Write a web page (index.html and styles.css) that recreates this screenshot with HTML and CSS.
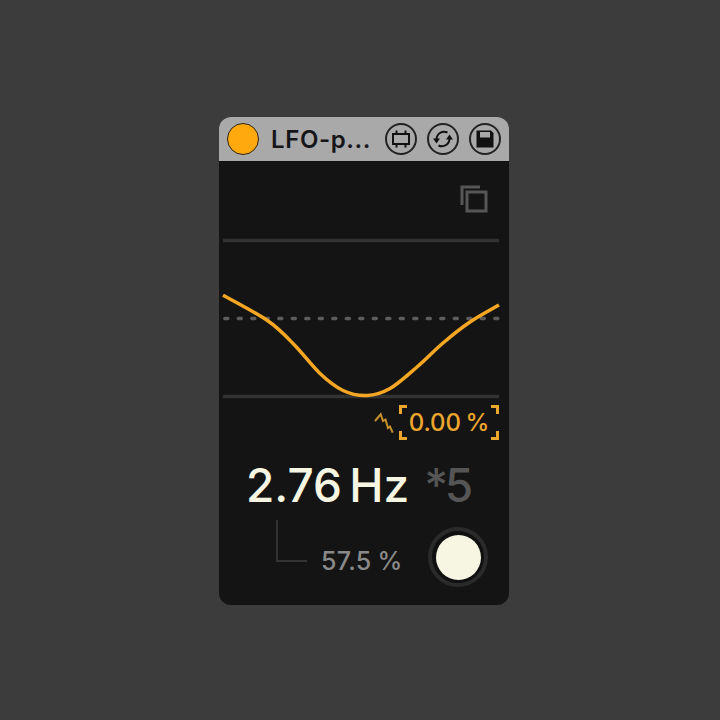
FILE: index.html
```html
<!DOCTYPE html>
<html lang="en">
<head>
<meta charset="utf-8">
<title>LFO-p...</title>
<link rel="stylesheet" href="styles.css">
</head>
<body>
<main class="device">
  <header class="titlebar">
    <span class="power"></span>
    <span class="name">LFO-p...</span>
    <span class="tools">
      <span class="tool">
        <svg viewBox="0 0 32 32" class="tool-icon"><circle cx="16" cy="16" r="15" class="ring"/><path d="M8 11h16v10H8zM11.500 7.500V11M20.500 7.500V11M11.500 21v3.500M20.500 21v3.500" class="glyph"/></svg>
      </span>
      <span class="tool">
        <svg viewBox="0 0 32 32" class="tool-icon"><circle cx="16" cy="16" r="15" class="ring"/><path d="M20.500 9.500C15 7 9.500 11 9.500 16.500M11.500 22.500C17 25 22.500 21 22.500 15.500" class="glyph"/><path d="M6 15.500h7l-3.500 5zM26 16.500h-7l3.500-5z" class="fill"/></svg>
      </span>
      <span class="tool">
        <svg viewBox="0 0 32 32" class="tool-icon"><circle cx="16" cy="16" r="15" class="ring"/><path d="M7.500 7.500h14.500l2.500 2.500v14.500H7.500zM11 9v5.500h10V9z" class="fill save"/></svg>
      </span>
    </span>
  </header>
  <section class="panel">
    <div class="copy-row">
      <svg viewBox="0 0 28 28" class="copy-icon"><path d="M20 2H2v18" class="copy-back"/><rect x="7" y="7" width="19" height="19" class="copy-front"/></svg>
    </div>
    <svg viewBox="0 0 276 167" class="plot">
      <path d="M0 1.500H276M0 157.500H276" class="grid"/>
      <path d="M1.800 79.500H276" class="dots"/>
      <path d="M0 56.200C7.300 60.200 32 73.100 43.700 81C55.400 88.900 61.100 95.200 70 104.500C78.900 113.300 88.700 126.700 97 134.500C105.300 142.300 112.200 147.800 120 151.500C127.800 155.200 136.200 156.800 144 156.500C151.800 156.200 158.700 154.200 167 149.500C175.300 144.800 185.200 135.500 194 128C202.800 120.500 211.200 111.500 220 104C228.800 96.500 237.700 89.300 247 83C256.300 76.700 271.200 68.800 276 66" class="curve"/>
    </svg>
    <div class="phase-row">
      <svg viewBox="0 0 22 22" class="wave"><path d="M3 9L8.700 2.300L11 9L13.500 7.500L16 16L18 14.500L20.700 20.700" class="wave-line"/></svg>
      <span class="phase">
        <span class="phase-value">0.00 %</span>
        <svg viewBox="0 0 100 35" class="brackets" preserveAspectRatio="none"><path d="M8 1.500H1.500V9M92 1.500h6.500V9M8 33.500H1.500V26M92 33.500h6.500V26" class="bracket"/></svg>
      </span>
    </div>
    <div class="rate-row">
      <span class="rate">2.76 Hz</span>
      <span class="multiplier">*5</span>
    </div>
    <div class="depth-row">
      <span class="elbow"></span>
      <span class="depth">57.5 %</span>
      <span class="knob"><span class="knob-fill"></span></span>
    </div>
  </section>
</main>
</body>
</html>
```

FILE: styles.css
```css
* { box-sizing: border-box; }
html, body { margin: 0; height: 100%; }
body {
  background: #3c3c3c;
  font-family: "Inter", "Liberation Sans", sans-serif;
  padding: 117px 211px 0 219px;
}
.device {
  width: 290px;
  height: 488px;
  border-radius: 12px;
  overflow: hidden;
  background: #141414;
  display: flex;
  flex-direction: column;
}
.titlebar {
  height: 45px;
  flex: none;
  background: #a9a9a9;
  border-bottom: 1px solid #111;
  display: flex;
  align-items: center;
  padding: 0 8px 0 8px;
}
.power {
  width: 32px;
  height: 32px;
  border-radius: 50%;
  background: #ffa90e;
  border: 1.500px solid #2a2418;
}
.name {
  margin-left: 12px;
  font-size: 24px;
  font-weight: 600;
  color: #15151a;
  letter-spacing: .6px;
  flex: 1;
  white-space: nowrap;
}
.tools { display: flex; gap: 10px; }
.tool { display: block; width: 32px; height: 32px; }
.tool-icon { display: block; width: 32px; height: 32px; }
.ring { fill: none; stroke: #222; stroke-width: 2; }
.glyph { fill: none; stroke: #111; stroke-width: 2; }
.fill { fill: #111; }
.save { fill-rule: evenodd; }
.panel {
  flex: 1;
  display: flex;
  flex-direction: column;
  padding: 0 10px 0 4px;
}
.copy-row { height: 77px; flex: none; display: flex; justify-content: flex-end; padding: 23px 0 0; }
.copy-icon { width: 28px; height: 28px; display: block; margin-right: 11px; }
.copy-back, .copy-front { fill: none; stroke: #565656; stroke-width: 3; }
.plot { width: 276px; height: 167px; display: block; flex: none; overflow: visible; }
.grid { fill: none; stroke: #333; stroke-width: 3.500; }
.dots { fill: none; stroke: #5c5c5c; stroke-width: 3.500; stroke-linecap: round; stroke-dasharray: 3 10.500; }
.curve { fill: none; stroke: #f5a623; stroke-width: 3.500; }
.phase-row { display: flex; justify-content: flex-end; align-items: center; height: 35px; margin-top: -1px; flex: none; }
.wave { width: 22px; height: 22px; display: block; margin-right: 5px; }
.wave-line { fill: none; stroke: #c8912c; stroke-width: 2; }
.phase {
  position: relative;
  width: 100px;
  height: 35px;
  display: flex;
  align-items: center;
  justify-content: center;
}
.phase-value { font-size: 24px; font-weight: 500; word-spacing: -2px; color: #eda62d; white-space: nowrap; }
.brackets { position: absolute; inset: 0; width: 100%; height: 100%; }
.bracket { fill: none; stroke: #eda62d; stroke-width: 3; }
.rate-row { display: flex; align-items: baseline; margin-top: 17px; padding-left: 23px; height: 63px; flex: none; }
.rate { font-size: 46px; font-weight: 500; color: #f6f6e2; word-spacing: -5px; white-space: nowrap; }
.multiplier { font-size: 46px; font-weight: 500; color: #555; margin-left: 15px; letter-spacing: -3.500px; }
.depth-row { display: flex; align-items: flex-start; height: 72px; padding-left: 53px; flex: none; }
.elbow { width: 31px; height: 42px; border-left: 2px solid #333; border-bottom: 2px solid #333; flex: none; }
.depth { font-size: 25px; font-weight: 500; letter-spacing: .3px; word-spacing: -1px; color: #8a8a8a; margin-left: 14px; margin-top: 26px; white-space: nowrap; }
.knob {
  margin-left: auto;
  margin-top: 7px;
  margin-right: 11px;
  width: 60px;
  height: 60px;
  border-radius: 50%;
  border: 4px solid #2a2a2a;
  background: #101010;
  display: flex;
  align-items: center;
  justify-content: center;
}
.knob-fill { width: 45px; height: 45px; border-radius: 50%; background: #f6f6e2; display: block; }
```
